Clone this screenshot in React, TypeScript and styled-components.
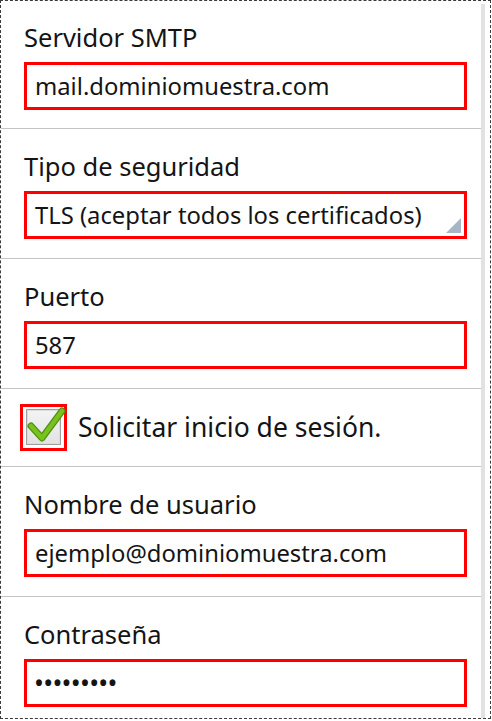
import React from 'react'
import styled, { createGlobalStyle } from 'styled-components'

const GlobalStyle = createGlobalStyle`
  html, body {
    margin: 0;
    padding: 0;
    background: #ffffff;
  }
  body {
    font-family: "Noto Sans", "Open Sans", "DejaVu Sans", sans-serif;
    color: #141414;
  }
`

interface FieldProps {
  label: string
  value: string
  select?: boolean
  password?: boolean
  first?: boolean
}

const Field: React.FC<FieldProps> = ({ label, value, select, password, first }) => (
  <S.Section $first={first}>
    <S.Label>{label}</S.Label>
    <S.InputBox>
      <S.Value $password={password}>{value}</S.Value>
      {select && <S.Corner />}
    </S.InputBox>
  </S.Section>
)

const CheckMark = () => (
  <svg width='40' height='40' viewBox='0 0 40 40'>
    <path d='M5 21 L16 33 L36 6' fill='none' stroke='#4f8f10' strokeWidth='7' strokeLinecap='round' strokeLinejoin='round' />
    <path d='M5 21 L16 33 L36 6' fill='none' stroke='#78c21e' strokeWidth='4.5' strokeLinecap='round' strokeLinejoin='round' />
  </svg>
)

export default function App() {
  return (
    <>
      <GlobalStyle />
      <S.Frame>
        <S.Content>
          <Field first label='Servidor SMTP' value='mail.dominiomuestra.com' />
          <Field label='Tipo de seguridad' value='TLS (aceptar todos los certificados)' select />
          <Field label='Puerto' value='587' />
          <S.CheckRow>
            <S.CheckFrame>
              <S.CheckBox>
                <S.Tick>
                  <CheckMark />
                </S.Tick>
              </S.CheckBox>
            </S.CheckFrame>
            <S.CheckText>Solicitar inicio de sesión.</S.CheckText>
          </S.CheckRow>
          <Field label='Nombre de usuario' value='ejemplo@dominiomuestra.com' />
          <Field label='Contraseña' value='•••••••••' password />
        </S.Content>
        <S.Scrollbar />
      </S.Frame>
    </>
  )
}

const S = {
  Frame: styled.div`
    width: 491px;
    height: 719px;
    box-sizing: border-box;
    border: 1px dashed #3a3a3a;
    display: flex;
    overflow: hidden;
    padding-right: 5px;
  `,
  Content: styled.div`
    width: 480px;
    display: flex;
    flex-direction: column;
  `,
  Scrollbar: styled.div`
    width: 4px;
    margin-top: 3px;
    background: #e2e2e2;
  `,
  Section: styled.div<{ $first?: boolean }>`
    flex: none;
    height: ${p => (p.$first ? 128 : 130)}px;
    box-sizing: border-box;
    padding: ${p => (p.$first ? 20 : 21)}px 14px 0 23px;
    border-bottom: 1px solid #c4c4c4;
    display: flex;
    flex-direction: column;
  `,
  Label: styled.div`
    font-size: 25.5px;
    line-height: 32px;
    margin-bottom: 9px;
    white-space: nowrap;
  `,
  InputBox: styled.div`
    position: relative;
    height: 48px;
    box-sizing: border-box;
    border: 3px solid #ff0000;
    padding: 0 8px;
    display: flex;
    align-items: center;
  `,
  Value: styled.span<{ $password?: boolean }>`
    font-size: ${p => (p.$password ? 21 : 23.8)}px;
    font-weight: ${p => (p.$password ? 700 : 400)};
    letter-spacing: ${p => (p.$password ? '1.3px' : '0')};
    white-space: nowrap;
  `,
  Corner: styled.div`
    position: absolute;
    right: 3px;
    bottom: 3px;
    width: 0;
    height: 0;
    border-left: 15px solid transparent;
    border-bottom: 15px solid #a6b6c6;
  `,
  CheckRow: styled.div`
    flex: none;
    height: 78px;
    box-sizing: border-box;
    padding: 0 14px 1px 19px;
    border-bottom: 1px solid #c4c4c4;
    display: flex;
    align-items: center;
    gap: 11px;
  `,
  CheckFrame: styled.div`
    width: 47px;
    height: 47px;
    box-sizing: border-box;
    border: 3px solid #ff0000;
    display: flex;
    align-items: center;
    justify-content: center;
  `,
  CheckBox: styled.div`
    position: relative;
    width: 35px;
    height: 36px;
    box-sizing: border-box;
    border: 1px solid #a0a0a0;
    background: linear-gradient(#f4f4f4, #e2e2e2);
    box-shadow: inset 0 0 0 1px #dcdcdc;
  `,
  Tick: styled.div`
    position: absolute;
    left: -1px;
    top: -5px;
    line-height: 0;
  `,
  CheckText: styled.span`
    font-size: 26.5px;
    line-height: 32px;
    white-space: nowrap;
  `
}
